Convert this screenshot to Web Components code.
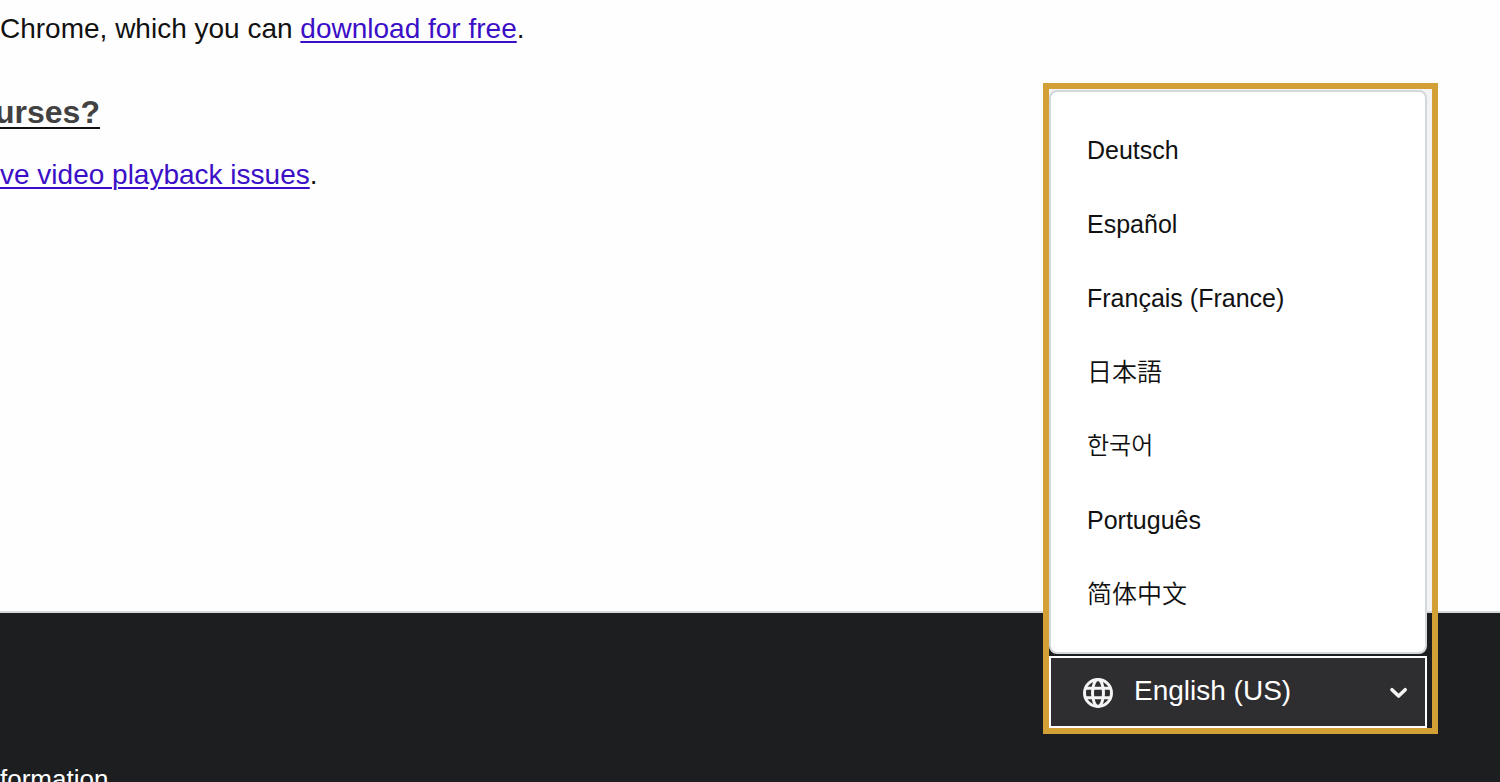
<!DOCTYPE html>
<html lang="en">
<head>
<meta charset="utf-8">
<title>Help center</title>
<style>
body{margin:0;height:100vh;overflow:hidden;background:#fefefe;color:#111;font-family:"Liberation Sans",Arial,"Noto Sans CJK JP",sans-serif}
</style>
</head>
<body>
<help-page>
  <help-article>
    <p>Chrome, which you can <a href="#download">download for free</a>.</p>
    <h2>urses?</h2>
    <p><a href="#playback">ve video playback issues</a>.</p>
  </help-article>
  <site-footer slot="footer">
    <language-picker slot="language" label="English (US)">
      <language-option lang="de">Deutsch</language-option>
      <language-option lang="es">Español</language-option>
      <language-option lang="fr">Français (France)</language-option>
      <language-option lang="ja">日本語</language-option>
      <language-option lang="ko">한국어</language-option>
      <language-option lang="pt">Português</language-option>
      <language-option lang="zh-CN">简体中文</language-option>
    </language-picker>
    formation
  </site-footer>
</help-page>
<script>
const define = (name, html) => customElements.define(name, class extends HTMLElement {
  constructor() {
    super();
    const template = document.createElement('template');
    template.innerHTML = html;
    this.attachShadow({mode: 'open'}).append(template.content.cloneNode(true));
  }
  connectedCallback() {
    const label = this.shadowRoot.querySelector('[data-label]');
    if (label) label.textContent = this.getAttribute('label');
  }
});

define('help-page', `<style>
  :host{display:flex;flex-direction:column;min-height:100%}
  main{padding-bottom:415px}
</style><main><slot></slot></main><slot name="footer"></slot>`);

define('help-article', `<style>
  :host{display:block;padding-top:8px}
  ::slotted(p){margin:0;font-size:28px;line-height:42px}
  ::slotted(h2){margin:40px 0 20px;font-size:32px;line-height:44px;color:#414141;text-indent:-5px;text-decoration:underline;text-decoration-color:#111;text-decoration-thickness:2px;text-underline-offset:4px}
</style><slot></slot>`);

const linkStyle = document.createElement('style');
linkStyle.textContent = 'help-article a{color:#3b0fc7;text-decoration-thickness:2px;text-underline-offset:3px}';
document.head.append(linkStyle);

define('site-footer', `<style>
  :host{display:flex;flex-direction:column;flex:1;border-top:2px solid #d6d9dc;background:#1d1e20;color:#fff}
  .top{display:flex;justify-content:flex-end;padding:43px 73px 33px 0}
  a{font-size:26px;line-height:36px;color:inherit;text-decoration:none}
</style><div class="top"><slot name="language"></slot></div><a href="#information"><slot></slot></a>`);

define('language-picker', `<style>
  :host{display:block;position:relative;width:378px;height:72px}
  .frame{position:absolute;left:-6px;right:-11px;bottom:-6px;border:6px solid #d3a036;padding:1px 5px 0 0;background:linear-gradient(#f3f3f4 522px,#d6d9dc 522px,#d6d9dc 524px,#1d1e20 524px)}
  nav{display:block;box-sizing:border-box;margin-bottom:2px;padding:21px 0;border:2px solid #d3d8dd;border-radius:8px;background:#fff;color:#111}
  button{box-sizing:border-box;width:100%;height:72px;display:flex;align-items:center;gap:20px;padding:0 17px 0 31px;border:2px solid #fff;border-radius:0;background:#2e2d30;color:#fff;font:28px/36px "Liberation Sans",Arial,sans-serif;text-align:left}
  .label{flex:1;padding-bottom:3px}
  svg{display:block;fill:none;stroke:#f4f4f4}
</style><div class="frame"><nav aria-label="Languages"><slot></slot></nav>
<button type="button" aria-haspopup="true" aria-expanded="true">
<svg width="32" height="32" viewBox="0 0 32 32" stroke-width="3" aria-hidden="true"><circle cx="16" cy="17" r="13.5"/><ellipse cx="16" cy="17" rx="5.5" ry="13.5"/><path d="M4 12.3H28M4 21.7H28"/></svg>
<span class="label" data-label></span>
<svg width="20" height="20" viewBox="0 0 20 20" stroke="#fff" stroke-width="3.6" stroke-linecap="round" stroke-linejoin="round" aria-hidden="true"><path d="M4 7.7L10.6 14L17.2 7.7"/></svg>
</button></div>`);

define('language-option', `<style>
  :host{display:block}
  a{display:block;padding:0 36px;font-size:25px;line-height:74px;color:inherit;text-decoration:none}
  :host(:lang(ja)) a,:host(:lang(ko)) a,:host(:lang(zh)) a{line-height:70px;padding-bottom:4px;font-weight:350}
  :host(:lang(ja)) a{font-family:"Noto Sans CJK JP",sans-serif}
  :host(:lang(ko)) a{font-family:"Noto Sans CJK KR",sans-serif;font-size:24px}
  :host(:lang(zh)) a{font-family:"Noto Sans CJK SC",sans-serif}
</style><a href="#language"><slot></slot></a>`);
</script>
</body>
</html>
